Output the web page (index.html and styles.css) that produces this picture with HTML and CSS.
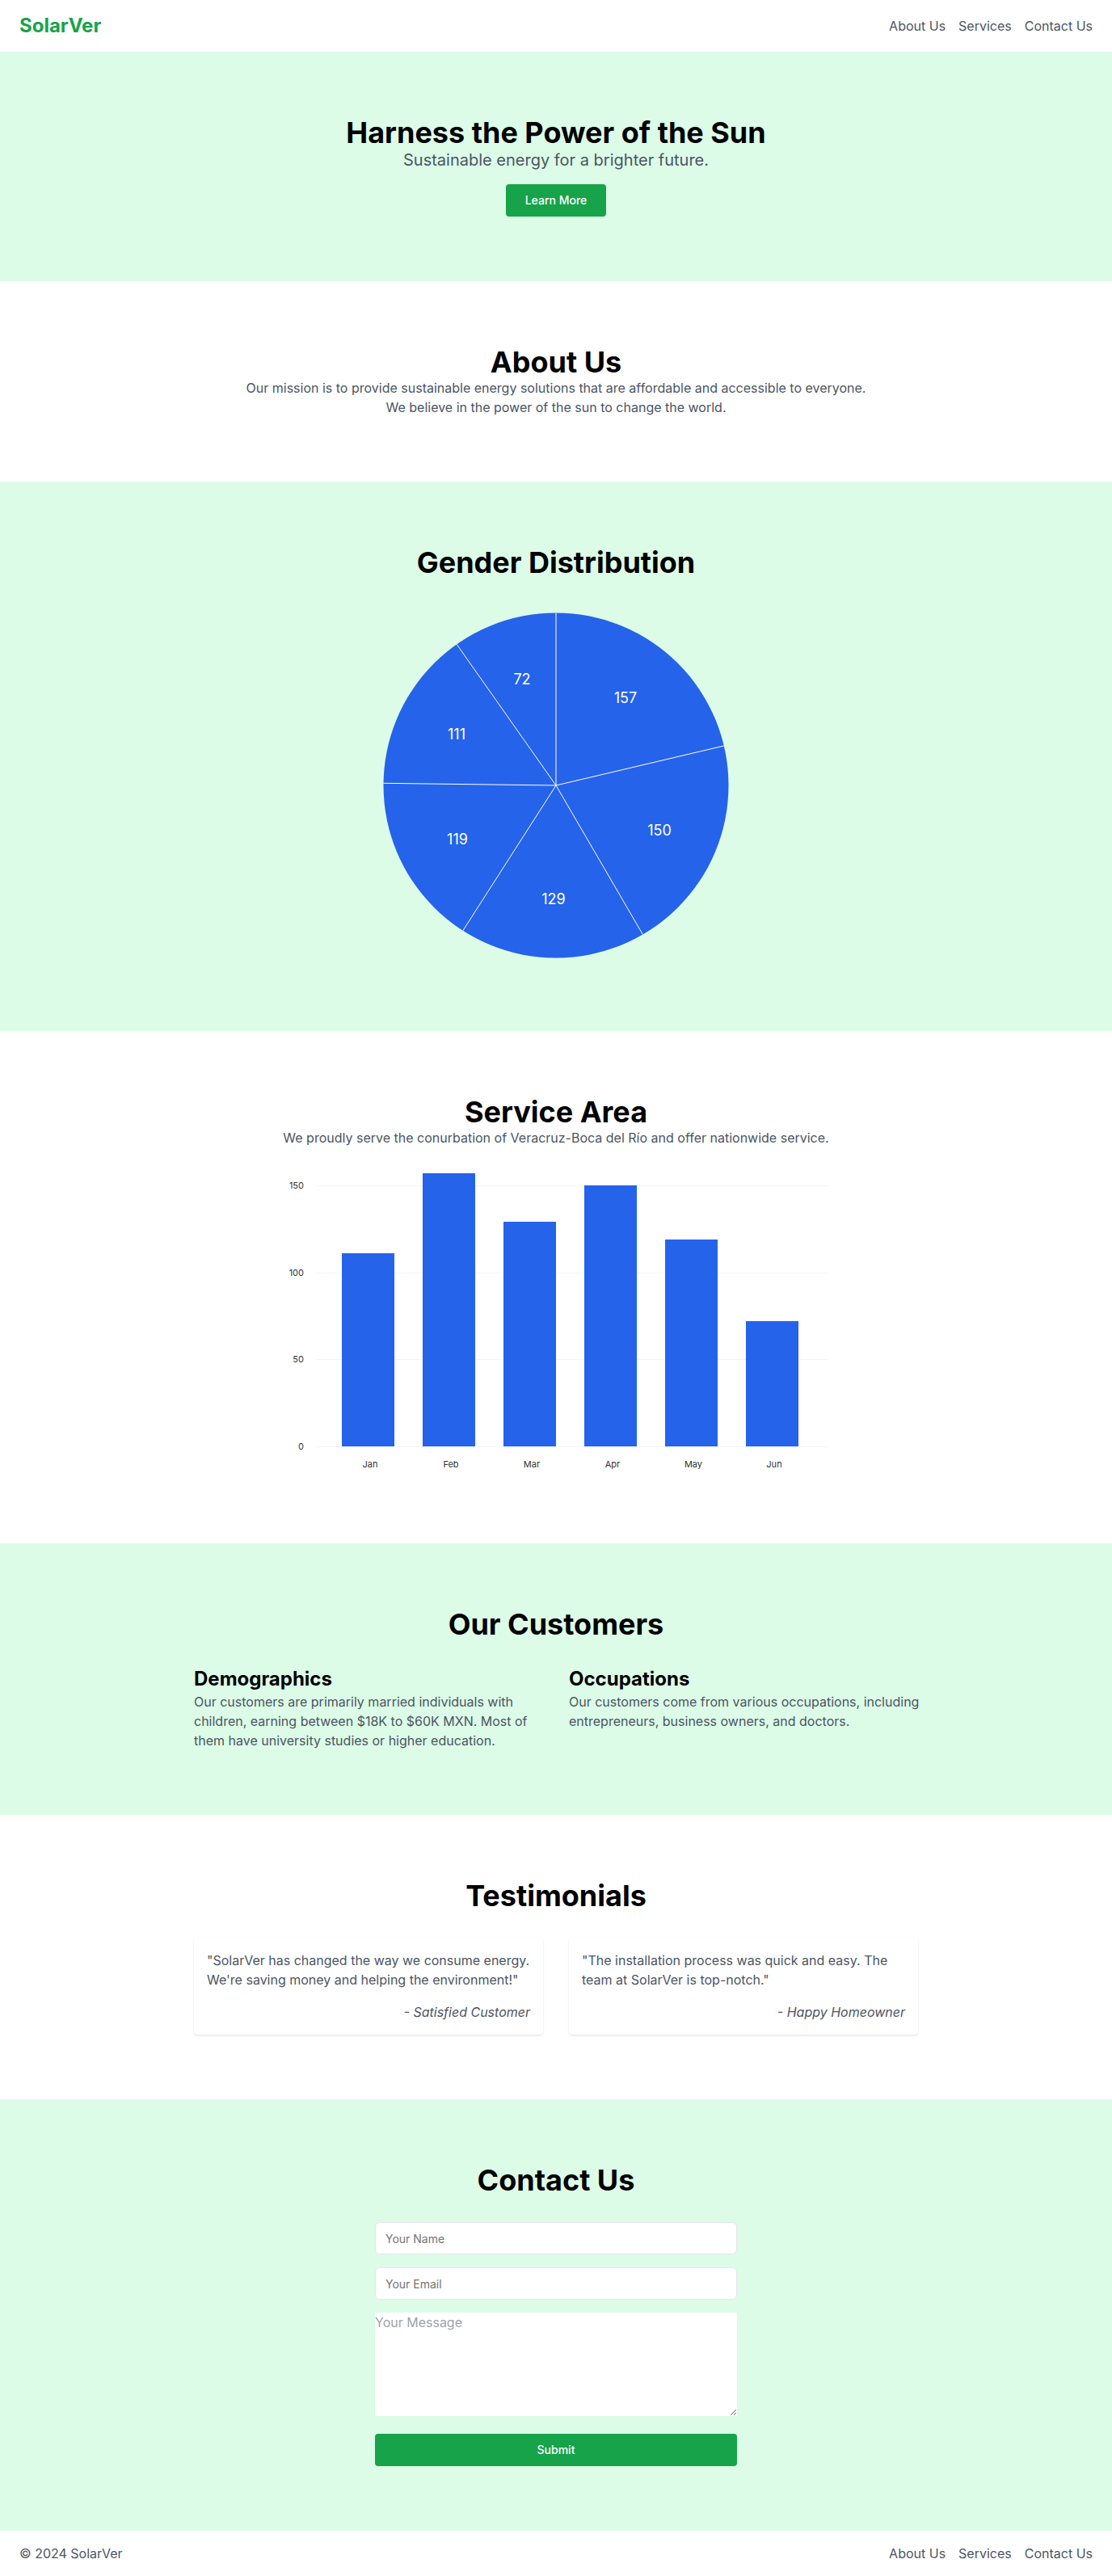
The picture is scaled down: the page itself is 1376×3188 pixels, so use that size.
FILE: index.html
```html
<!DOCTYPE html>
<html lang="en">
<head>
<meta charset="utf-8">
<meta name="viewport" content="width=device-width, initial-scale=1">
<title>SolarVer</title>
<link rel="stylesheet" href="styles.css">
</head>
<body>
<header class="bar bar-top">
  <a class="brand" href="#">SolarVer</a>
  <nav class="nav">
    <a href="#about">About Us</a>
    <a href="#services">Services</a>
    <a href="#contact">Contact Us</a>
  </nav>
</header>
<main>
  <section class="section tinted">
    <h1 class="title">Harness the Power of the Sun</h1>
    <p class="lead">Sustainable energy for a brighter future.</p>
    <button class="button hero-button" type="button">Learn More</button>
  </section>

  <section class="section" id="about">
    <h2 class="title">About Us</h2>
    <p class="copy about-copy">Our mission is to provide sustainable energy solutions that are affordable and accessible to everyone. We believe in the power of the sun to change the world.</p>
  </section>

  <section class="section tinted">
    <h2 class="title">Gender Distribution</h2>
    <svg class="pie" viewBox="-224 -224 448 448" role="img" aria-label="Gender distribution pie chart">
      <circle class="mark" r="213.5"/>
      <path class="divider" d="M0 0V-213.5M0 0L207.8 -49M0 0L107.4 184.5M0 0L-115.2 179.8M0 0L-213.5 -2.7M0 0L-122.8 -174.6"/>
      <g class="pie-labels">
        <text x="86" y="-109">157</text>
        <text x="128" y="55">150</text>
        <text x="-3" y="140">129</text>
        <text x="-122" y="66">119</text>
        <text x="-123" y="-64">111</text>
        <text x="-42" y="-132">72</text>
      </g>
    </svg>
  </section>

  <section class="section" id="services">
    <h2 class="title">Service Area</h2>
    <p class="copy">We proudly serve the conurbation of Veracruz-Boca del Río and offer nationwide service.</p>
    <svg class="bars" viewBox="0 0 672 378" role="img" aria-label="Monthly service bar chart">
      <path class="grid-line" d="M40 15.5H672M40 123.5H672M40 230.5H672M40 338.5H672"/>
      <g class="mark">
        <rect x="71" y="99" width="65" height="239"/>
        <rect x="171" y="0" width="65" height="338"/>
        <rect x="271" y="60" width="65" height="278"/>
        <rect x="371" y="15" width="65" height="323"/>
        <rect x="471" y="82" width="65" height="256"/>
        <rect x="571" y="183" width="65" height="155"/>
      </g>
      <g class="y-labels">
        <text x="24" y="15">150</text>
        <text x="24" y="123">100</text>
        <text x="24" y="230">50</text>
        <text x="24" y="338">0</text>
      </g>
      <g class="x-labels">
        <text x="106" y="360">Jan</text>
        <text x="206" y="360">Feb</text>
        <text x="306" y="360">Mar</text>
        <text x="406" y="360">Apr</text>
        <text x="506" y="360">May</text>
        <text x="606" y="360">Jun</text>
      </g>
    </svg>
  </section>

  <section class="section tinted">
    <h2 class="title">Our Customers</h2>
    <div class="columns">
      <article>
        <h3 class="subtitle">Demographics</h3>
        <p class="copy">Our customers are primarily married individuals with children, earning between $18K to $60K MXN. Most of them have university studies or higher education.</p>
      </article>
      <article>
        <h3 class="subtitle">Occupations</h3>
        <p class="copy set-lines">Our customers come from various occupations, including<br> entrepreneurs, business owners, and doctors.</p>
      </article>
    </div>
  </section>

  <section class="section">
    <h2 class="title">Testimonials</h2>
    <div class="columns">
      <article class="card">
        <p class="copy">"SolarVer has changed the way we consume energy. We're saving money and helping the environment!"</p>
        <p class="copy author">- Satisfied Customer</p>
      </article>
      <article class="card">
        <p class="copy">"The installation process was quick and easy. The team at SolarVer is top-notch."</p>
        <p class="copy author">- Happy Homeowner</p>
      </article>
    </div>
  </section>

  <section class="section tinted" id="contact">
    <h2 class="title">Contact Us</h2>
    <form class="form">
      <input class="field" type="text" placeholder="Your Name" aria-label="Your Name">
      <input class="field" type="email" placeholder="Your Email" aria-label="Your Email">
      <textarea class="message" placeholder="Your Message" aria-label="Your Message"></textarea>
      <button class="button" type="submit">Submit</button>
    </form>
  </section>
</main>
<footer class="bar">
  <p>© 2024 SolarVer</p>
  <nav class="nav">
    <a href="#about">About Us</a>
    <a href="#services">Services</a>
    <a href="#contact">Contact Us</a>
  </nav>
</footer>
</body>
</html>
```
FILE: styles.css
```css
*,
*::before,
*::after {
  box-sizing: border-box;
}

body {
  margin: 0;
  background: #fff;
  color: #000;
  font-family: Inter, "Liberation Sans", sans-serif;
  font-size: 16px;
  line-height: 24px;
}

h1,
h2,
h3,
p {
  margin: 0;
}

a {
  color: inherit;
  text-decoration: none;
}

.bar {
  display: flex;
  align-items: center;
  justify-content: space-between;
  padding: 16px 24px;
  color: #4b5563;
}

.brand {
  color: #16a34a;
  font-size: 24px;
  font-weight: 700;
  line-height: 32px;
}

.nav {
  display: flex;
  gap: 16px;
}

.section {
  display: flex;
  flex-direction: column;
  align-items: center;
  padding: 80px 24px;
}

.tinted {
  background: #dcfce7;
}

.title {
  font-size: 36px;
  font-weight: 700;
  line-height: 40px;
  text-align: center;
}

.lead {
  color: #4b5563;
  font-size: 20px;
  line-height: 28px;
  text-align: center;
}

.copy {
  color: #4b5563;
}

.about-copy {
  max-width: 768px;
  text-align: center;
}

.subtitle {
  font-size: 24px;
  font-weight: 700;
  line-height: 32px;
}

.button {
  height: 40px;
  padding: 0 24px;
  border: 0;
  border-radius: 4px;
  background: #16a34a;
  color: #fff;
  font: 500 14px/20px Inter, "Liberation Sans", sans-serif;
  cursor: pointer;
}

.hero-button {
  margin-top: 16px;
}

.pie {
  display: block;
  width: 100%;
  max-width: 448px;
  margin-top: 32px;
}

.mark {
  fill: #2563eb;
}

.divider {
  fill: none;
  stroke: #fff;
  stroke-width: 1;
}

.pie-labels {
  fill: #fff;
  font-size: 18px;
  text-anchor: middle;
  dominant-baseline: central;
}

.bars {
  display: block;
  width: 100%;
  max-width: 672px;
  margin-top: 32px;
}

.grid-line {
  stroke: #f3f4f6;
  stroke-width: 1;
}

.x-labels,
.y-labels {
  fill: #333;
  font-size: 11px;
  dominant-baseline: central;
}

.x-labels {
  text-anchor: middle;
}

.y-labels {
  text-anchor: end;
}

.columns {
  display: grid;
  grid-template-columns: repeat(2, minmax(0, 1fr));
  gap: 32px;
  width: 100%;
  max-width: 896px;
  margin-top: 32px;
}

.set-lines {
  white-space: nowrap;
}

.card {
  display: flex;
  flex-direction: column;
  gap: 16px;
  padding: 16px;
  border-radius: 4px;
  background: #fff;
  box-shadow: 0 1px 3px rgba(0, 0, 0, 0.1), 0 1px 2px -1px rgba(0, 0, 0, 0.1);
}

.author {
  font-style: italic;
  text-align: right;
}

.form {
  display: flex;
  flex-direction: column;
  gap: 16px;
  width: 100%;
  max-width: 448px;
  margin-top: 32px;
}

.field {
  width: 100%;
  height: 40px;
  padding: 8px 12px;
  border: 1px solid #e5e7eb;
  border-radius: 6px;
  background: #fff;
  font: 400 14px/20px Inter, "Liberation Sans", sans-serif;
}

.field::placeholder {
  color: #757575;
}

.message {
  height: 128px;
  margin-bottom: 6px;
  padding: 0;
  border: 0;
  background: #fff;
  font: 400 16px/24px Inter, "Liberation Sans", sans-serif;
  resize: vertical;
}

.message::placeholder {
  color: #9ca3af;
}

@media (max-width: 768px) {
  .columns {
    grid-template-columns: minmax(0, 1fr);
  }

  .set-lines {
    white-space: normal;
  }
}
```
